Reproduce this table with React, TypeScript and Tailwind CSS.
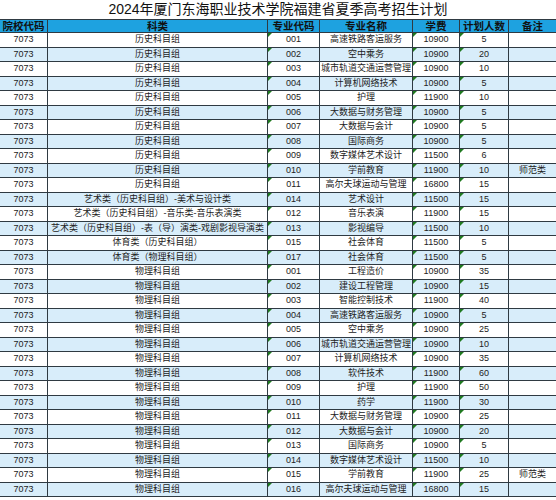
type Row = {
  kelei: string;
  code: string;
  name: string;
  fee: string;
  count: string;
  note?: string;
};

const HIST = "历史科目组";
const PHYS = "物理科目组";

const rows: Row[] = [
  { kelei: HIST, code: "001", name: "高速铁路客运服务", fee: "10900", count: "5" },
  { kelei: HIST, code: "002", name: "空中乘务", fee: "10900", count: "20" },
  { kelei: HIST, code: "003", name: "城市轨道交通运营管理", fee: "10900", count: "10" },
  { kelei: HIST, code: "004", name: "计算机网络技术", fee: "10900", count: "5" },
  { kelei: HIST, code: "005", name: "护理", fee: "11900", count: "10" },
  { kelei: HIST, code: "006", name: "大数据与财务管理", fee: "10900", count: "5" },
  { kelei: HIST, code: "007", name: "大数据与会计", fee: "10900", count: "5" },
  { kelei: HIST, code: "008", name: "国际商务", fee: "10900", count: "5" },
  { kelei: HIST, code: "009", name: "数字媒体艺术设计", fee: "11500", count: "6" },
  { kelei: HIST, code: "010", name: "学前教育", fee: "11900", count: "10", note: "师范类" },
  { kelei: HIST, code: "011", name: "高尔夫球运动与管理", fee: "16800", count: "15" },
  { kelei: "艺术类（历史科目组）-美术与设计类", code: "014", name: "艺术设计", fee: "11500", count: "15" },
  { kelei: "艺术类（历史科目组）-音乐类-音乐表演类", code: "012", name: "音乐表演", fee: "11900", count: "15" },
  { kelei: "艺术类（历史科目组）-表（导）演类-戏剧影视导演类", code: "013", name: "影视编导", fee: "11500", count: "10" },
  { kelei: "体育类（历史科目组）", code: "015", name: "社会体育", fee: "11500", count: "5" },
  { kelei: "体育类（物理科目组）", code: "017", name: "社会体育", fee: "11500", count: "5" },
  { kelei: PHYS, code: "001", name: "工程造价", fee: "10900", count: "35" },
  { kelei: PHYS, code: "002", name: "建设工程管理", fee: "10900", count: "15" },
  { kelei: PHYS, code: "003", name: "智能控制技术", fee: "11900", count: "40" },
  { kelei: PHYS, code: "004", name: "高速铁路客运服务", fee: "10900", count: "5" },
  { kelei: PHYS, code: "005", name: "空中乘务", fee: "10900", count: "25" },
  { kelei: PHYS, code: "006", name: "城市轨道交通运营管理", fee: "10900", count: "10" },
  { kelei: PHYS, code: "007", name: "计算机网络技术", fee: "10900", count: "35" },
  { kelei: PHYS, code: "008", name: "软件技术", fee: "11900", count: "60" },
  { kelei: PHYS, code: "009", name: "护理", fee: "11900", count: "50" },
  { kelei: PHYS, code: "010", name: "药学", fee: "11900", count: "30" },
  { kelei: PHYS, code: "011", name: "大数据与财务管理", fee: "10900", count: "25" },
  { kelei: PHYS, code: "012", name: "大数据与会计", fee: "10900", count: "20" },
  { kelei: PHYS, code: "013", name: "国际商务", fee: "10900", count: "5" },
  { kelei: PHYS, code: "014", name: "数字媒体艺术设计", fee: "11500", count: "10" },
  { kelei: PHYS, code: "015", name: "学前教育", fee: "11900", count: "25", note: "师范类" },
  { kelei: PHYS, code: "016", name: "高尔夫球运动与管理", fee: "16800", count: "15" },
];

const cols = "grid grid-cols-[48px_220px_52px_93px_47px_49px_47px]";
const font = { fontFamily: '"Liberation Sans", "Noto Sans CJK SC", sans-serif' };

function Flag() {
  return (
    <span className="absolute left-0 top-0 h-0 w-0 border-t-[4px] border-r-[4px] border-t-[#1f7a1f] border-r-transparent" />
  );
}

function Cell({ children, flag, last }: { children?: React.ReactNode; flag?: boolean; last?: boolean }) {
  return (
    <div
      className={`relative flex items-center justify-center overflow-hidden whitespace-nowrap leading-none ${
        last ? "" : "border-r border-[#2f3a42]"
      }`}
    >
      {flag && <Flag />}
      {children}
    </div>
  );
}

export default function App() {
  const headers = ["院校代码", "科类", "专业代码", "专业名称", "学费", "计划人数", "备注"];
  return (
    <div className="h-[500px] w-[556px] overflow-hidden bg-white text-[#222]" style={font}>
      <div className="flex h-[20px] items-center justify-center border-b border-[#2f3a42] text-[14px] text-[#111]">
        2024年厦门东海职业技术学院福建省夏季高考招生计划
      </div>
      <div className={`${cols} h-[13px] border-b border-[#2f3a42] bg-[#1ea2e0] text-[10.5px] font-bold text-[#111]`}>
        {headers.map((h, i) => (
          <Cell key={h} last={i === headers.length - 1}>
            {h}
          </Cell>
        ))}
      </div>
      {rows.map((r, i) => (
        <div
          key={i}
          className={`${cols} h-[14.5px] border-b border-[#2f3a42] text-[9px] ${
            i % 2 === 1 ? "bg-[#d8edfa]" : "bg-white"
          }`}
        >
          <Cell>7073</Cell>
          <Cell>{r.kelei}</Cell>
          <Cell flag>{r.code}</Cell>
          <Cell>{r.name}</Cell>
          <Cell flag>{r.fee}</Cell>
          <Cell flag>{r.count}</Cell>
          <Cell last>{r.note}</Cell>
        </div>
      ))}
    </div>
  );
}
